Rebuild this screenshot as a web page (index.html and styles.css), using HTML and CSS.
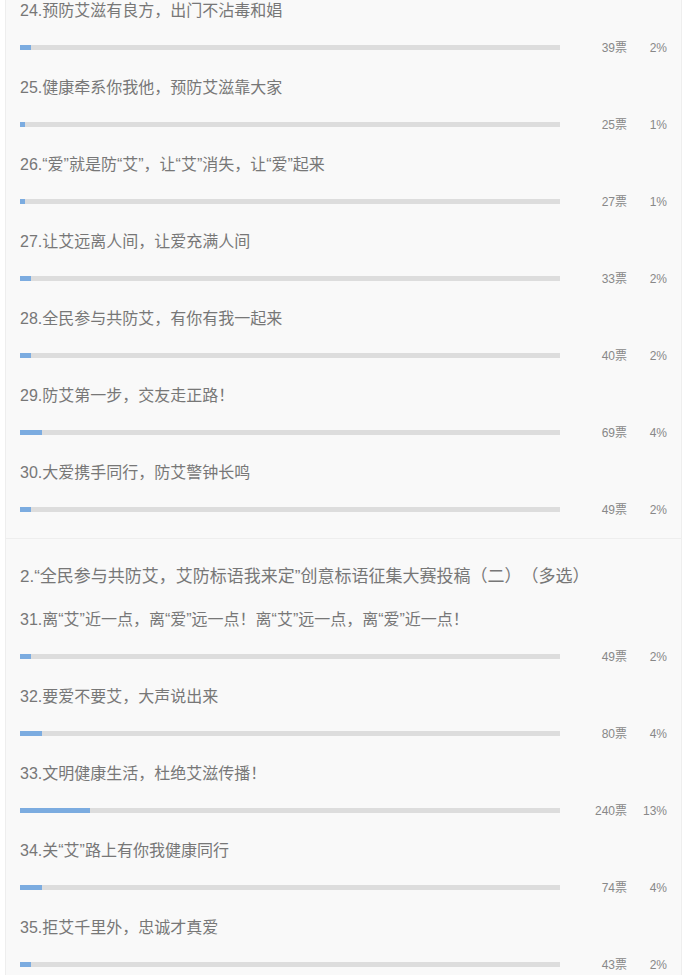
FILE: index.html
```html
<!DOCTYPE html>
<html lang="zh-CN">
<head>
    <meta charset="UTF-8">
    <meta name="viewport" content="width=device-width, initial-scale=1.0">
    <title>投票结果</title>
    <link rel="stylesheet" href="styles.css">
</head>
<body>
    <div class="panel">
        <div class="section">
            <div class="item">
                <div class="item-title">24.预防艾滋有良方，出门不沾毒和娼</div>
                <div class="bar-row">
                    <div class="bar"><div class="bar-fill" style="width: 2%"></div></div>
                    <span class="votes">39票</span>
                    <span class="percent">2%</span>
                </div>
            </div>
            <div class="item">
                <div class="item-title">25.健康牵系你我他，预防艾滋靠大家</div>
                <div class="bar-row">
                    <div class="bar"><div class="bar-fill" style="width: 1%"></div></div>
                    <span class="votes">25票</span>
                    <span class="percent">1%</span>
                </div>
            </div>
            <div class="item">
                <div class="item-title">26.“爱”就是防“艾”，让“艾”消失，让“爱”起来</div>
                <div class="bar-row">
                    <div class="bar"><div class="bar-fill" style="width: 1%"></div></div>
                    <span class="votes">27票</span>
                    <span class="percent">1%</span>
                </div>
            </div>
            <div class="item">
                <div class="item-title">27.让艾远离人间，让爱充满人间</div>
                <div class="bar-row">
                    <div class="bar"><div class="bar-fill" style="width: 2%"></div></div>
                    <span class="votes">33票</span>
                    <span class="percent">2%</span>
                </div>
            </div>
            <div class="item">
                <div class="item-title">28.全民参与共防艾，有你有我一起来</div>
                <div class="bar-row">
                    <div class="bar"><div class="bar-fill" style="width: 2%"></div></div>
                    <span class="votes">40票</span>
                    <span class="percent">2%</span>
                </div>
            </div>
            <div class="item">
                <div class="item-title">29.防艾第一步，交友走正路！</div>
                <div class="bar-row">
                    <div class="bar"><div class="bar-fill" style="width: 4%"></div></div>
                    <span class="votes">69票</span>
                    <span class="percent">4%</span>
                </div>
            </div>
            <div class="item">
                <div class="item-title">30.大爱携手同行，防艾警钟长鸣</div>
                <div class="bar-row">
                    <div class="bar"><div class="bar-fill" style="width: 2%"></div></div>
                    <span class="votes">49票</span>
                    <span class="percent">2%</span>
                </div>
            </div>
        </div>

        <div class="section">
            <div class="section-title">2.“全民参与共防艾，艾防标语我来定”创意标语征集大赛投稿（二）（多选）</div>
            <div class="item">
                <div class="item-title">31.离“艾”近一点，离“爱”远一点！离“艾”远一点，离“爱”近一点！</div>
                <div class="bar-row">
                    <div class="bar"><div class="bar-fill" style="width: 2%"></div></div>
                    <span class="votes">49票</span>
                    <span class="percent">2%</span>
                </div>
            </div>
            <div class="item">
                <div class="item-title">32.要爱不要艾，大声说出来</div>
                <div class="bar-row">
                    <div class="bar"><div class="bar-fill" style="width: 4%"></div></div>
                    <span class="votes">80票</span>
                    <span class="percent">4%</span>
                </div>
            </div>
            <div class="item">
                <div class="item-title">33.文明健康生活，杜绝艾滋传播！</div>
                <div class="bar-row">
                    <div class="bar"><div class="bar-fill" style="width: 13%"></div></div>
                    <span class="votes">240票</span>
                    <span class="percent">13%</span>
                </div>
            </div>
            <div class="item">
                <div class="item-title">34.关“艾”路上有你我健康同行</div>
                <div class="bar-row">
                    <div class="bar"><div class="bar-fill" style="width: 4%"></div></div>
                    <span class="votes">74票</span>
                    <span class="percent">4%</span>
                </div>
            </div>
            <div class="item">
                <div class="item-title">35.拒艾千里外，忠诚才真爱</div>
                <div class="bar-row">
                    <div class="bar"><div class="bar-fill" style="width: 2%"></div></div>
                    <span class="votes">43票</span>
                    <span class="percent">2%</span>
                </div>
            </div>
        </div>
    </div>
</body>
</html>
```

FILE: styles.css
```css
* {
    margin: 0;
    padding: 0;
    box-sizing: border-box;
}

body {
    font-family: "Liberation Sans", "Noto Sans CJK SC", sans-serif;
    background: #fff;
    color: #777;
    text-spacing-trim: space-all;
}

.panel {
    margin: -1px 5px 0;
    background: #f9f9f9;
    border-left: 1px solid #eee;
    border-right: 1px solid #eee;
}

.section {
    border-bottom: 1px solid #eee;
}

.section:last-child {
    border-bottom: none;
}

.section-title {
    padding: 26px 14px 0;
    margin-bottom: 19px;
    font-size: 17px;
    line-height: 24px;
    color: #777;
}

.item {
    padding: 0 14px 26px;
}

.item-title {
    font-size: 16px;
    line-height: 24px;
    margin-bottom: 22px;
    color: #777;
}

.bar-row {
    display: flex;
    align-items: center;
    height: 5px;
}

.bar {
    width: 540px;
    height: 5px;
    background: #ddd;
    flex-shrink: 0;
}

.bar-fill {
    height: 100%;
    background: #7cace0;
}

.votes,
.percent {
    font-size: 12px;
    line-height: 14px;
    color: #888;
    text-align: right;
    flex-shrink: 0;
}

.votes {
    width: 67px;
}

.percent {
    width: 40px;
}
```
